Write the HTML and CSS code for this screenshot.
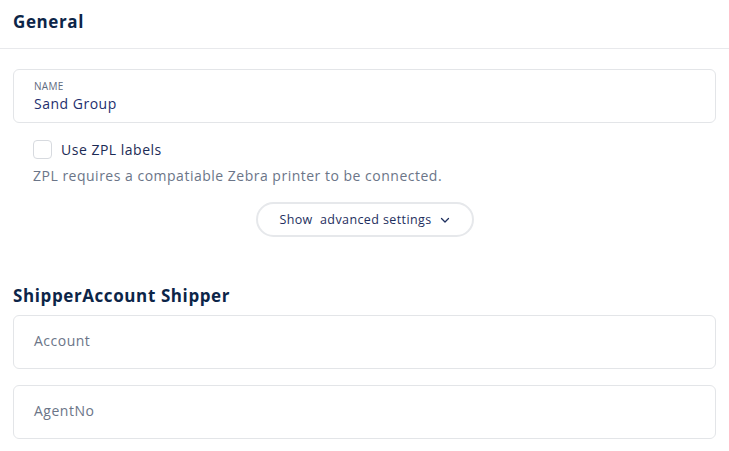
FILE: index.html
```html
<!DOCTYPE html>
<html>
<head>
<meta charset="utf-8">
<link rel="stylesheet" href="styles.css">
</head>
<body>
<div class="header"><h2 class="title">General</h2></div>
<div class="content">
  <div class="field">
    <div class="label">NAME</div>
    <div class="value">Sand Group</div>
  </div>
  <div class="checkrow">
    <span class="box"></span>
    <span class="checklabel">Use ZPL labels</span>
  </div>
  <div class="help">ZPL requires a compatiable Zebra printer to be connected.</div>
  <div class="btnrow">
    <button class="pill">Show&nbsp; advanced settings
      <svg class="chev" width="10" height="10" viewBox="0 0 10 10"><path d="M1.5 3.5 L5 7 L8.5 3.5" fill="none" stroke="#1e2f5e" stroke-width="1.3" stroke-linecap="round" stroke-linejoin="round"/></svg>
    </button>
  </div>
  <h2 class="title section">ShipperAccount Shipper</h2>
  <div class="field plain"><span class="ph">Account</span></div>
  <div class="field plain gap"><span class="ph">AgentNo</span></div>
</div>
</body>
</html>
```

FILE: styles.css
```css
* { box-sizing: border-box; }
body {
  margin: 0;
  background: #fff;
  font-family: "Open Sans", "Noto Sans", sans-serif;
  color: #1e2f5e;
  letter-spacing: 0.5px;
}
.header {
  height: 49px;
  border-bottom: 1px solid #e8e9ec;
  padding: 0 13px;
  display: flex;
  align-items: center;
}
.title {
  margin: 0;
  font-size: 17px;
  font-weight: 700;
  color: #0c2548;
  line-height: 1;
  letter-spacing: 0.6px;
}
.header .title { margin-top: -6px; }
.content {
  padding: 20px 13px 0 13px;
}
.field {
  height: 54px;
  border: 1px solid #e3e5e8;
  border-radius: 6px;
  padding: 9px 20px 0 20px;
}
.label {
  font-size: 10px;
  color: #5f6b7e;
  line-height: 14px;
  letter-spacing: 0.3px;
}
.value {
  font-size: 14px;
  color: #1e2f6e;
  line-height: 20px;
  margin-top: 1px;
}
.checkrow {
  display: flex;
  align-items: center;
  margin: 17px 0 0 20px;
  height: 19px;
}
.box {
  width: 19px;
  height: 19px;
  border: 1px solid #d7dadf;
  border-radius: 4px;
  background: #fff;
}
.checklabel {
  margin-left: 9px;
  font-size: 14px;
  color: #1c2b55;
}
.help {
  margin: 7px 0 0 20px;
  font-size: 14px;
  color: #6b7588;
  line-height: 20px;
}
.btnrow {
  display: flex;
  justify-content: center;
  margin-top: 16px;
}
.pill {
  width: 218px;
  height: 35px;
  border: 2px solid #e6e8eb;
  border-radius: 18px;
  background: #fff;
  font-family: inherit;
  font-size: 12.5px;
  letter-spacing: 0.4px;
  color: #1e2f5e;
  display: flex;
  align-items: center;
  justify-content: center;
  gap: 6px;
  padding: 0;
}
.chev { margin-left: 2px; margin-top: 1px; }
.section {
  margin-top: 50px;
  margin-bottom: 11px;
}
.field.plain {
  display: flex;
  align-items: center;
  padding: 0 20px 3px 20px;
  height: 54px;
}
.field.gap { margin-top: 16px; }
.ph {
  font-size: 14px;
  color: #6b7588;
}
```
